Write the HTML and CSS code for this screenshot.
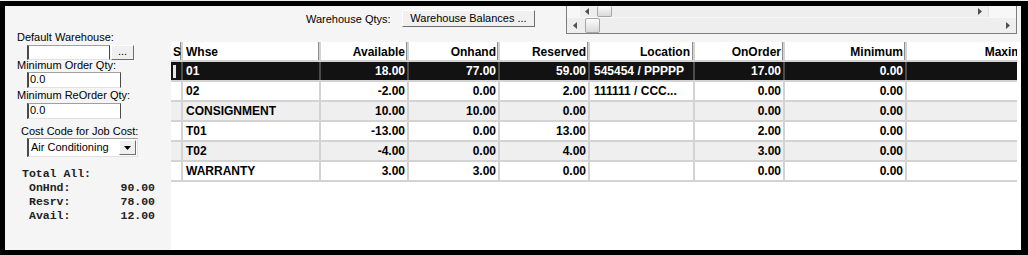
FILE: index.html
```html
<!DOCTYPE html>
<html>
<head>
<meta charset="utf-8">
<link rel="stylesheet" href="styles.css">
</head>
<body>
<div class="screen">
  <aside class="side">
    <div class="lbl l1">Default Warehouse:</div>
    <div class="whrow"><span class="inp whinp"></span><span class="dots">...</span></div>
    <div class="lbl l2">Minimum Order Qty:</div>
    <div class="inp qty q1">0.0</div>
    <div class="lbl l3">Minimum ReOrder Qty:</div>
    <div class="inp qty q2">0.0</div>
    <div class="lbl l4">Cost Code for Job Cost:</div>
    <div class="select">
      <span class="sel-text">Air Conditioning</span>
      <span class="sel-btn"><svg width="7" height="4" viewBox="0 0 7 4"><path d="M0 0H7L3.5 4Z" fill="#000"/></svg></span>
    </div>
    <div class="totals">
      <div class="ttl">Total All:</div>
      <div class="trow"><span>OnHnd:</span><span>90.00</span></div>
      <div class="trow"><span>Resrv:</span><span>78.00</span></div>
      <div class="trow"><span>Avail:</span><span>12.00</span></div>
    </div>
  </aside>
  <main class="main">
    <div class="topbar">
      <span class="tlabel">Warehouse Qtys:</span>
      <span class="wbtn">Warehouse Balances ...</span>
      <div class="scrollbox">
        <div class="sb sb1">
          <svg class="arr al" width="4" height="7" viewBox="0 0 4 7"><path d="M4 0L0 3.5L4 7Z" fill="#505050"/></svg>
          <span class="thumb t1"></span>
          <svg class="arr ar" width="4" height="7" viewBox="0 0 4 7"><path d="M0 0L4 3.5L0 7Z" fill="#505050"/></svg>
        </div>
        <div class="sb sb2">
          <svg class="arr al2" width="4" height="7" viewBox="0 0 4 7"><path d="M4 0L0 3.5L4 7Z" fill="#505050"/></svg>
          <span class="thumb t2"></span>
          <svg class="arr ar2" width="4" height="7" viewBox="0 0 4 7"><path d="M0 0L4 3.5L0 7Z" fill="#505050"/></svg>
        </div>
      </div>
    </div>
    <div class="grid">
      <div class="gwrap">
        <div class="row head">
          <div class="c cs">S</div>
          <div class="c cw">Whse</div>
          <div class="c ca r">Available</div>
          <div class="c co r">Onhand</div>
          <div class="c cr r">Reserved</div>
          <div class="c cl r">Location</div>
          <div class="c coo r">OnOrder</div>
          <div class="c cm r">Minimum</div>
          <div class="c cx r">Maximum</div>
        </div>
        <div class="row sel">
          <div class="c cs"><span class="ind"></span></div>
          <div class="c cw">01</div>
          <div class="c ca r">18.00</div>
          <div class="c co r">77.00</div>
          <div class="c cr r">59.00</div>
          <div class="c cl">545454 / PPPPP</div>
          <div class="c coo r">17.00</div>
          <div class="c cm r">0.00</div>
          <div class="c cx r"></div>
        </div>
        <div class="row">
          <div class="c cs"></div>
          <div class="c cw">02</div>
          <div class="c ca r">-2.00</div>
          <div class="c co r">0.00</div>
          <div class="c cr r">2.00</div>
          <div class="c cl">111111 / CCC...</div>
          <div class="c coo r">0.00</div>
          <div class="c cm r">0.00</div>
          <div class="c cx r"></div>
        </div>
        <div class="row alt">
          <div class="c cs"></div>
          <div class="c cw">CONSIGNMENT</div>
          <div class="c ca r">10.00</div>
          <div class="c co r">10.00</div>
          <div class="c cr r">0.00</div>
          <div class="c cl"></div>
          <div class="c coo r">0.00</div>
          <div class="c cm r">0.00</div>
          <div class="c cx r"></div>
        </div>
        <div class="row">
          <div class="c cs"></div>
          <div class="c cw">T01</div>
          <div class="c ca r">-13.00</div>
          <div class="c co r">0.00</div>
          <div class="c cr r">13.00</div>
          <div class="c cl"></div>
          <div class="c coo r">2.00</div>
          <div class="c cm r">0.00</div>
          <div class="c cx r"></div>
        </div>
        <div class="row alt">
          <div class="c cs"></div>
          <div class="c cw">T02</div>
          <div class="c ca r">-4.00</div>
          <div class="c co r">0.00</div>
          <div class="c cr r">4.00</div>
          <div class="c cl"></div>
          <div class="c coo r">3.00</div>
          <div class="c cm r">0.00</div>
          <div class="c cx r"></div>
        </div>
        <div class="row">
          <div class="c cs"></div>
          <div class="c cw">WARRANTY</div>
          <div class="c ca r">3.00</div>
          <div class="c co r">3.00</div>
          <div class="c cr r">0.00</div>
          <div class="c cl"></div>
          <div class="c coo r">0.00</div>
          <div class="c cm r">0.00</div>
          <div class="c cx r"></div>
        </div>
      </div>
    </div>
  </main>
</div>
</body>
</html>
```

FILE: styles.css
```css
html, body {
  margin: 0;
  padding: 0;
}
body {
  width: 1028px;
  height: 255px;
  overflow: hidden;
  background: #f0f0f0;
  font-family: "Liberation Sans", Arial, sans-serif;
  font-size: 11px;
  color: #000;
}
.screen {
  margin-top: 1px;
  width: 1016px;
  height: 244px;
  border-top: 5px solid #000;
  border-left: 5px solid #000;
  border-right: 7px solid #000;
  border-bottom: 5px solid #000;
  display: flex;
  background: #f5f5f5;
}
.side {
  width: 166px;
  flex-shrink: 0;
  background: #f5f5f5;
  display: flex;
  flex-direction: column;
  align-items: flex-start;
}
.lbl {
  line-height: 12px;
  height: 12px;
  white-space: nowrap;
  margin-left: 12px;
}
.l1 { margin-top: 25px; }
.l2 { margin-top: -1px; }
.l3 { margin-top: 1px; }
.l4 { margin-top: 6px; margin-left: 16px; }
.inp {
  box-sizing: border-box;
  background: #fff;
  border-top: 1px solid #a0a0a0;
  border-left: 2px solid #4a4a4a;
  border-right: 1px solid #4a4a4a;
  border-bottom: 1px solid #e2e2e2;
  line-height: 13px;
  padding-left: 1px;
}
.whrow {
  display: flex;
  margin: 2px 0 0 22px;
  height: 15px;
}
.whinp {
  width: 83px;
  height: 15px;
}
.dots {
  box-sizing: border-box;
  width: 23px;
  height: 15px;
  margin-left: 1px;
  background: #f0f0f0;
  border-top: 1px solid #fff;
  border-left: 1px solid #fff;
  border-right: 1px solid #6e6e6e;
  border-bottom: 1px solid #6e6e6e;
  text-align: center;
  line-height: 11px;
}
.qty {
  width: 94px;
  height: 16px;
  margin-left: 22px;
}
.q1 { margin-top: 1px; }
.q2 { margin-top: 2px; }
.select {
  box-sizing: border-box;
  width: 111px;
  height: 19px;
  margin: 1px 0 0 22px;
  background: #fff;
  border-top: 1px solid #a0a0a0;
  border-left: 2px solid #4a4a4a;
  border-right: 1px solid #e2e2e2;
  border-bottom: 1px solid #e2e2e2;
  display: flex;
  align-items: center;
}
.sel-text {
  flex: 1;
  padding-left: 2px;
  line-height: 13px;
}
.sel-btn {
  box-sizing: border-box;
  width: 17px;
  height: 15px;
  margin-right: 1px;
  background: #f0f0f0;
  border-top: 1px solid #fff;
  border-left: 1px solid #fff;
  border-right: 1px solid #6e6e6e;
  border-bottom: 1px solid #6e6e6e;
  display: flex;
  align-items: center;
  justify-content: center;
}
.totals {
  margin: 10px 0 0 17px;
  font-family: "Liberation Mono", "Courier New", monospace;
  font-weight: bold;
  font-size: 11.5px;
  line-height: 14px;
  color: #222;
}
.trow {
  width: 126px;
  padding-left: 7px;
  display: flex;
  justify-content: space-between;
}
.main {
  width: 850px;
  flex-shrink: 0;
  display: flex;
  flex-direction: column;
}
.topbar {
  height: 36px;
  display: flex;
  align-items: flex-start;
  background: #f5f5f5;
}
.tlabel {
  width: 96px;
  margin: 7px 0 0 135px;
  line-height: 12px;
  white-space: nowrap;
}
.wbtn {
  box-sizing: border-box;
  width: 133px;
  height: 17px;
  margin-top: 4px;
  background: #f0f0f0;
  border-top: 1px solid #fff;
  border-left: 1px solid #fff;
  border-right: 1px solid #6e6e6e;
  border-bottom: 1px solid #6e6e6e;
  text-align: center;
  line-height: 14px;
  white-space: nowrap;
}
.scrollbox {
  box-sizing: border-box;
  width: 451px;
  height: 28px;
  margin-left: 31px;
  border-left: 1px solid #7e7e7e;
  border-right: 1px solid #7e7e7e;
  border-bottom: 1px solid #7e7e7e;
  background: #f7f7f7;
  display: flex;
  flex-direction: column;
}
.sb {
  display: flex;
  align-items: center;
  background: #eeeeee;
}
.sb1 {
  height: 11px;
  width: 408px;
  margin-left: 13px;
  border-right: 1px solid #dedede;
}
.sb2 {
  height: 15px;
  margin-top: 1px;
}
.al { margin-left: 5px; }
.al2 { margin-left: 6px; }
.ar { margin-left: auto; margin-right: 6px; }
.ar2 { margin-left: auto; margin-right: 6px; }
.thumb {
  box-sizing: border-box;
  width: 15px;
  background: linear-gradient(#fbfbfb, #dadada);
  border: 1px solid #a6a6a6;
  border-radius: 2px;
}
.t1 {
  height: 11px;
  margin-left: 8px;
  border-top: none;
  align-self: flex-start;
}
.t2 {
  height: 15px;
  margin-left: 8px;
}
.grid {
  flex: 1;
  background: #fff;
}
.gwrap {
  width: 846px;
  overflow: hidden;
  font-weight: bold;
  font-size: 12px;
}
.row {
  display: flex;
  height: 20px;
  box-sizing: border-box;
  border-bottom: 2px solid #d3d3d3;
  background: #fff;
}
.row.alt { background: #efefef; }
.row.sel { background: #121212; color: #fff; }
.c {
  flex-shrink: 0;
  box-sizing: border-box;
  height: 18px;
  line-height: 18px;
  border-right: 2px solid #d3d3d3;
  white-space: nowrap;
  overflow: hidden;
  padding: 0 2px 0 3px;
}
.sel .c { border-right-color: #4c4c4c; }
.r { text-align: right; }
.cs { width: 12px; padding: 0 0 0 2px; }
.cw { width: 138px; }
.ca { width: 88px; }
.co { width: 91px; }
.cr { width: 90px; }
.cl { width: 105px; padding-left: 4px; }
.coo { width: 90px; }
.cm { width: 122px; }
.cx { width: 135px; border-right: none; }
.head .c {
  line-height: 16px;
  padding-top: 2px;
  box-shadow: inset -1px 0 0 #8e8e8e;
}
.head .cl { padding-right: 3px; }
.head .cx { box-shadow: none; }
.sel .cs {
  background: #121212;
  padding: 0;
}
.ind {
  display: block;
  width: 3px;
  height: 13px;
  margin: 3px 0 0 2px;
  background: #e4e4e4;
}
```
